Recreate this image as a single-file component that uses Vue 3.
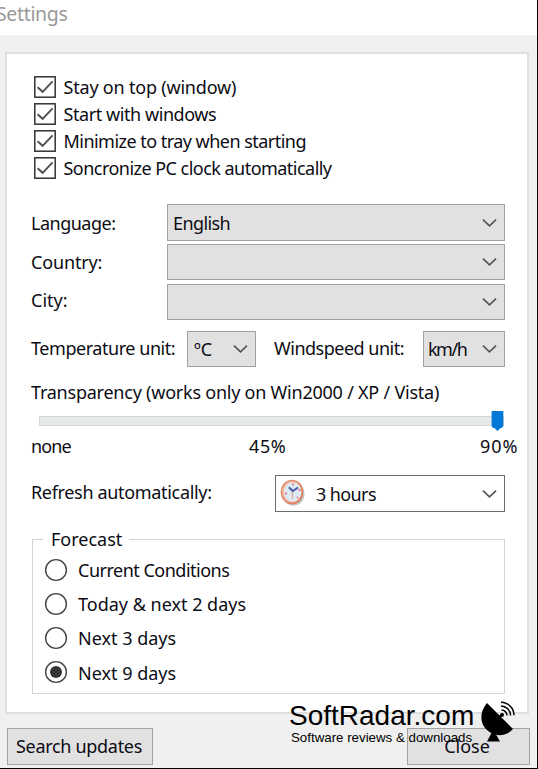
<template>
  <div class="window">
    <header class="titlebar">Settings</header>

    <main class="panel">
      <div class="checks">
        <label v-for="option in options" :key="option.text" class="check-row" @click.prevent="option.checked = !option.checked">
          <svg class="checkbox" width="22" height="22" viewBox="0 0 22 22">
            <rect x="0.8" y="0.8" width="20.4" height="20.4" fill="#fff" stroke="#333" stroke-width="1.5" />
            <path v-if="option.checked" d="M3.6 11.2 L8.6 15.8 L18.6 5.4" fill="none" stroke="#505050" stroke-width="1.9" />
          </svg>
          <span :class="option.name">{{ option.text }}</span>
        </label>
      </div>

      <div class="row row-language">
        <span class="label language">Language:</span>
        <div class="select grow"><span class="english">English</span><svg class="chevron" viewBox="0 0 16 10"><path d="M1 1.5 L8 8 L15 1.5" /></svg></div>
      </div>
      <div class="row row-country">
        <span class="label country">Country:</span>
        <div class="select grow"><span></span><svg class="chevron" viewBox="0 0 16 10"><path d="M1 1.5 L8 8 L15 1.5" /></svg></div>
      </div>
      <div class="row row-city">
        <span class="label city">City:</span>
        <div class="select grow"><span></span><svg class="chevron" viewBox="0 0 16 10"><path d="M1 1.5 L8 8 L15 1.5" /></svg></div>
      </div>

      <div class="row row-units">
        <span class="label temperature">Temperature unit:</span>
        <div class="select select-temp"><span class="celsius">ºC</span><svg class="chevron" viewBox="0 0 16 10"><path d="M1 1.5 L8 8 L15 1.5" /></svg></div>
        <span class="label windspeed">Windspeed unit:</span>
        <div class="select select-wind"><span class="kmh">km/h</span><svg class="chevron" viewBox="0 0 16 10"><path d="M1 1.5 L8 8 L15 1.5" /></svg></div>
      </div>

      <div class="transparency">Transparency (works only on Win2000 / XP / Vista)</div>
      <div class="slider">
        <div class="track"></div>
        <svg class="thumb" width="13" height="20" viewBox="0 0 13 20">
          <path d="M0.6 0 H12.3 V15 L10.8 17 H9.5 L6.5 20 L3.5 17 H2 L0.6 15 Z" fill="#0078d7" />
        </svg>
      </div>
      <div class="scale">
        <span class="none">none</span>
        <span class="half">45%</span>
        <span class="full">90%</span>
      </div>

      <div class="row row-refresh">
        <span class="label refresh">Refresh automatically:</span>
        <div class="select select-refresh">
          <svg class="clock" width="25" height="27" viewBox="0 0 25 27">
            <ellipse cx="13.5" cy="15" rx="11" ry="11.5" fill="#8a8a8a" opacity="0.5" />
            <ellipse cx="12" cy="13" rx="11.3" ry="12.3" fill="#dc7f5e" />
            <ellipse cx="11.7" cy="12.7" rx="10" ry="11" fill="#f2b097" />
            <ellipse cx="12.5" cy="13" rx="8.8" ry="9.8" fill="#dcebf6" />
            <path d="M13 4.5 V6.5 M5 14.5 H7 M18.5 11 H20.5 M17 18 L18 19" stroke="#ee6f86" stroke-width="1.8" />
            <path d="M12.5 13 V20" stroke="#e8a489" stroke-width="1.3" />
            <path d="M8.8 8.3 L12.8 12 L18 8.5" fill="none" stroke="#4757a6" stroke-width="1.9" />
          </svg>
          <span class="hours">3 hours</span>
          <svg class="chevron" viewBox="0 0 16 10"><path d="M1 1.5 L8 8 L15 1.5" /></svg>
        </div>
      </div>

      <fieldset class="forecast">
        <legend>Forecast</legend>
        <label v-for="item in forecasts" :key="item.text" class="radio-row" @click.prevent="selected = item.name">
          <svg class="radio" width="24" height="24" viewBox="0 0 24 24">
            <circle cx="12" cy="12" r="10.4" fill="#fff" stroke="#444" stroke-width="1.4" />
            <circle v-if="selected === item.name" cx="12" cy="12" r="6" fill="#333" />
          </svg>
          <span :class="item.name">{{ item.text }}</span>
        </label>
      </fieldset>
    </main>

    <footer class="actions">
      <button type="button" class="btn search">Search updates</button>
      <button type="button" class="btn close">Close</button>
    </footer>

    <div class="watermark">
      <div class="brand">
        <div class="brand-name">SoftRadar.com</div>
        <div class="brand-sub">Software reviews &amp; downloads</div>
      </div>
      <svg class="dish" width="36" height="42" viewBox="0 0 36 42">
        <path d="M7 2 C-1 11 0 23 7 29 C14 36 26 36 33 28 Z" />
        <path d="M9 29 L14 30 L20 40.5 H7 L12 31 Z" />
        <path d="M18 17 L23 13" stroke="#000" stroke-width="2" />
        <circle cx="22" cy="14" r="2" />
        <path d="M21.5 9 A5.5 5.5 0 0 1 27 14.5 M21 5 A9.5 9.5 0 0 1 30.5 14.5 M21 1.2 A13.2 13.2 0 0 1 34 14.2" fill="none" stroke="#000" stroke-width="1.5" />
      </svg>
    </div>
  </div>
</template>

<script setup>
import { ref, reactive } from 'vue'

const options = reactive([
  { name: 'top', text: 'Stay on top (window)', checked: true },
  { name: 'start', text: 'Start with windows', checked: true },
  { name: 'tray', text: 'Minimize to tray when starting', checked: true },
  { name: 'sync', text: 'Soncronize PC clock automatically', checked: true }
])

const forecasts = [
  { name: 'current', text: 'Current Conditions' },
  { name: 'today', text: 'Today & next 2 days' },
  { name: 'next3', text: 'Next 3 days' },
  { name: 'next9', text: 'Next 9 days' }
]

const selected = ref('next9')
</script>

<style>
body {
  margin: 0;
  overflow: hidden;
}
</style>

<style scoped>
.window {
  position: relative;
  box-sizing: border-box;
  width: 538px;
  height: 769px;
  overflow: hidden;
  background: #f0f0f0;
  border-right: 1px solid #000;
  border-bottom: 1px solid #000;
  font-family: "Noto Sans", "Open Sans", sans-serif;
  font-size: 18px;
  line-height: 24px;
  color: #0c0c14;
  white-space: nowrap;
}

.titlebar {
  height: 35px;
  margin-left: -4px;
  background: #fff;
  color: #999;
  font-size: 19.5px;
  line-height: 28px;
  letter-spacing: -0.35px;
}

.panel {
  box-sizing: border-box;
  width: 524px;
  height: 662px;
  margin: 17px 0 0 5px;
  padding: 19px 22px 0 24px;
  background: #fff;
  border: 2px solid #dfdfdf;
}

.checks {
  margin-left: 3px;
}

.check-row {
  display: flex;
  align-items: center;
  height: 27px;
  gap: 7.5px;
}

.top {
  letter-spacing: -0.2px;
}

.start {
  letter-spacing: -0.43px;
}

.tray,
.sync {
  letter-spacing: -0.53px;
}

.row {
  display: flex;
  align-items: center;
}

.label {
  flex: none;
  width: 136px;
}

.select {
  box-sizing: border-box;
  display: flex;
  align-items: center;
  justify-content: space-between;
  height: 36px;
  padding: 0 7px 0 6px;
  background: #e1e1e1;
  border: 1px solid #a0a0a0;
}

.grow {
  flex: 1;
}

.chevron {
  flex: none;
  width: 15px;
  height: 10px;
}

.chevron path {
  fill: none;
  stroke: #555;
  stroke-width: 1.8;
}

.language,
.windspeed {
  letter-spacing: -0.5px;
}

.english {
  margin-left: -1px;
  letter-spacing: -0.6px;
}

.country {
  letter-spacing: -0.15px;
}

.temperature {
  letter-spacing: -0.45px;
}

.kmh {
  margin-left: -2px;
  letter-spacing: -1.5px;
}

.row-language {
  margin-top: 23px;
}

.row-language .select {
  height: 37px;
}

.row-country {
  margin-top: 3px;
}

.row-city {
  margin-top: 4px;
}

.row-city .label {
  padding-bottom: 5px;
}

.row-units {
  margin-top: 11px;
}

.row-units .label {
  padding-bottom: 3px;
}

.row-units .temperature {
  width: 156px;
}

.select-temp {
  width: 69px;
}

.row-units .windspeed {
  width: 149px;
  margin-left: 18px;
}

.select-wind {
  width: 82px;
}

.transparency {
  margin-top: 13px;
  letter-spacing: -0.23px;
}

.slider {
  position: relative;
  height: 20px;
  margin: 7px 0 0 8px;
  padding-top: 5px;
  box-sizing: border-box;
}

.track {
  box-sizing: border-box;
  width: 465px;
  height: 10px;
  background: #e7eaea;
  border: 1px solid #d6d6d6;
}

.thumb {
  position: absolute;
  top: 0;
  left: 452px;
}

.scale {
  display: flex;
  margin-top: 3px;
}

.scale span {
  flex: none;
}

.none {
  width: 218px;
  letter-spacing: -0.9px;
}

.half {
  width: 231px;
  letter-spacing: 0.6px;
}

.full {
  letter-spacing: 1px;
}

.row-refresh {
  margin-top: 17px;
}

.row-refresh .label {
  width: 244px;
  padding-bottom: 4px;
  letter-spacing: -0.33px;
}

.select-refresh {
  width: 230px;
  height: 37px;
  padding-left: 4px;
  background: #fff;
  border-color: #6e6e6e;
}

.clock {
  margin-top: -3px;
}

.hours {
  flex: 1;
  padding-left: 11px;
  letter-spacing: -0.6px;
}

.forecast {
  box-sizing: border-box;
  width: 473px;
  height: 167px;
  margin: 15px 0 0 1px;
  padding: 2px 0 0 11px;
  border: 1px solid #d4d4d4;
}

.forecast legend {
  padding: 0 7px 0 8px;
  margin-left: -1px;
}

.radio-row {
  display: flex;
  align-items: center;
  height: 34px;
  gap: 10px;
}

.radio-row:last-child span {
  padding-top: 2px;
}

.current {
  letter-spacing: -0.5px;
}

.actions {
  display: flex;
  justify-content: space-between;
  padding: 14px 7px 0 7px;
}

.btn {
  box-sizing: border-box;
  height: 37px;
  padding: 0 0 2px;
  background: #e1e1e1;
  border: 1px solid #a3a3a3;
  font: inherit;
  color: inherit;
}

.search {
  width: 146px;
  padding-right: 2px;
  letter-spacing: -0.3px;
}

.close {
  width: 123px;
  padding-right: 3px;
}

.watermark {
  position: absolute;
  left: 289px;
  top: 700px;
  display: flex;
  color: #000;
  font-family: "Liberation Sans", Arial, sans-serif;
}

.brand {
  width: 191px;
}

.brand-name {
  font-size: 28px;
  line-height: 32px;
}

.brand-sub {
  padding-left: 2px;
  font-size: 13.3px;
  line-height: 12px;
}

.dish {
  margin-top: 1px;
}
</style>
